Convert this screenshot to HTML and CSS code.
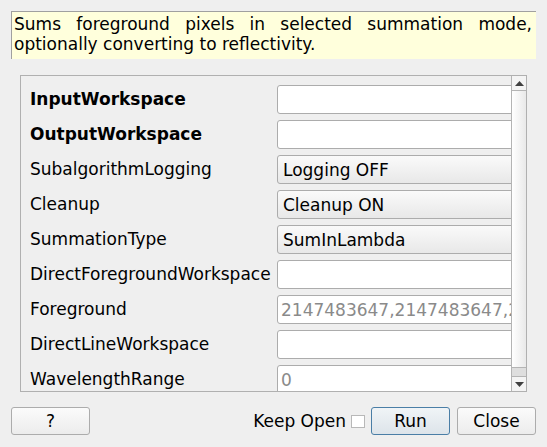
FILE: index.html
```html
<!DOCTYPE html>
<html>
<head>
<meta charset="utf-8">
<link rel="stylesheet" href="styles.css">
</head>
<body>
<div class="dialog">
  <div class="desc">Sums foreground pixels in selected summation mode, optionally converting to reflectivity.</div>
  <div class="frame">
    <div class="viewport">
      <div class="grid">
        <div class="label bold">InputWorkspace</div><div class="field edit"></div>
        <div class="label bold">OutputWorkspace</div><div class="field edit"></div>
        <div class="label">SubalgorithmLogging</div><div class="field combo">Logging OFF</div>
        <div class="label">Cleanup</div><div class="field combo">Cleanup ON</div>
        <div class="label">SummationType</div><div class="field combo">SumInLambda</div>
        <div class="label">DirectForegroundWorkspace</div><div class="field edit"></div>
        <div class="label">Foreground</div><div class="field edit ph">2147483647,2147483647,2147483647</div>
        <div class="label">DirectLineWorkspace</div><div class="field edit"></div>
        <div class="label">WavelengthRange</div><div class="field edit ph">0</div>
      </div>
    </div>
    <div class="scrollbar">
      <div class="arrow up"><svg width="9" height="5" viewBox="0 0 9 5"><path d="M0 5 L4.5 0 L9 5 Z" fill="#404040"/></svg></div>
      <div class="handle"></div>
      <div class="trough"></div>
      <div class="arrow down"><svg width="9" height="5" viewBox="0 0 9 5"><path d="M0 0 L4.5 5 L9 0 Z" fill="#404040"/></svg></div>
    </div>
  </div>
  <div class="buttons">
    <button class="btn help">?</button>
    <div class="spacer"></div>
    <span class="keep">Keep Open</span>
    <span class="check"></span>
    <button class="btn run">Run</button>
    <button class="btn close">Close</button>
  </div>
</div>
</body>
</html>
```
FILE: styles.css
```css
html, body {
  margin: 0;
  padding: 0;
  background: #efefef;
}
body {
  font-family: "DejaVu Sans", sans-serif;
  font-size: 17px;
  color: #000;
}
.dialog {
  width: 547px;
  height: 447px;
  padding-top: 11px;
  box-sizing: border-box;
}
.desc {
  margin-left: 11px;
  width: 525px;
  box-sizing: border-box;
  height: 48px;
  background: #ffffdc;
  border-top: 1px solid #a0a0a0;
  border-left: 1px solid #a0a0a0;
  padding: 2px 4px 0 2px;
  line-height: 20px;
  text-align: justify;
}
.frame {
  margin-left: 20px;
  margin-top: 16px;
  width: 507px;
  height: 317px;
  box-sizing: border-box;
  border: 1px solid #b0b0b0;
  display: flex;
}
.viewport {
  flex: 1;
  overflow: hidden;
}
.grid {
  display: grid;
  grid-template-columns: 247px 260px;
  grid-auto-rows: 29px;
  row-gap: 6px;
  padding: 9px 0 0 9px;
}
.label {
  display: flex;
  align-items: center;
  white-space: nowrap;
  padding-bottom: 2px;
  box-sizing: border-box;
}
.bold { font-weight: bold; }
.field {
  box-sizing: border-box;
  border: 1px solid #acacac;
  border-radius: 3px;
  display: flex;
  align-items: center;
  white-space: nowrap;
  overflow: hidden;
}
.edit {
  background: #fff;
  padding-left: 3px;
}
.combo {
  background: linear-gradient(#fafafa, #e8e8e8);
  padding-left: 5px;
}
.ph { color: #8a8a8a; }
.scrollbar {
  width: 14px;
  border-left: 1px solid #b4b4b4;
  display: flex;
  flex-direction: column;
  background: #f0f0f0;
}
.arrow {
  height: 14px;
  display: flex;
  align-items: center;
  justify-content: center;
  background: #f4f4f4;
}
.arrow.up { border-bottom: 1px solid #b4b4b4; }
.arrow.down { border-top: 1px solid #b4b4b4; }
.handle {
  height: 276px;
  background: linear-gradient(to right, #ffffff, #e9e9e9);
  border-bottom: 1px solid #b4b4b4;
}
.trough {
  flex: 1;
  background: #dedede;
}
.buttons {
  display: flex;
  align-items: center;
  padding: 15px 11px 0 11px;
  height: 28px;
}
.btn {
  font-family: "DejaVu Sans", sans-serif;
  font-size: 17px;
  height: 28px;
  box-sizing: border-box;
  border: 1px solid #acacac;
  border-radius: 3px;
  background: linear-gradient(#fbfbfb, #ececec);
  color: #000;
  padding: 0;
}
.help { width: 79px; }
.spacer { flex: 1; }
.keep { margin-right: 5px; }
.check {
  width: 14px;
  height: 13px;
  box-sizing: border-box;
  border: 1px solid #b8b8b8;
  background: #fff;
  margin-right: 6px;
}
.run {
  width: 79px;
  border-color: #4a7ea6;
  background: linear-gradient(#f0f4f7, #dde4ea);
  margin-right: 7px;
}
.close { width: 79px; }
```
